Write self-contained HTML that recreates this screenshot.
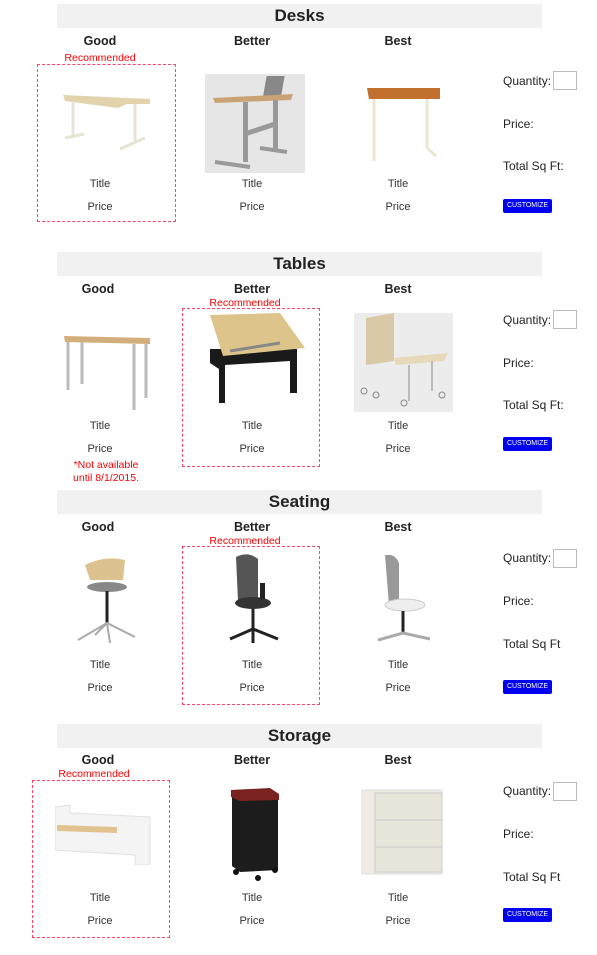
<!DOCTYPE html>
<html><head><meta charset="utf-8">
<style>
*{margin:0;padding:0;box-sizing:border-box}
body{width:597px;height:955px;background:#fff;position:relative;overflow:hidden;font-family:"Liberation Sans",Arial,sans-serif;color:#222}
.a{position:absolute}
.bar{position:absolute;left:57px;width:485px;height:24px;background:#f1f1f1;text-align:center;font-weight:bold;font-size:17px;line-height:24px;color:#222}
.lab{position:absolute;width:120px;text-align:center;font-weight:bold;font-size:12.5px;line-height:14px;color:#222}
.rec{position:absolute;width:120px;text-align:center;font-size:10.5px;color:#f00;line-height:12px}
.box{position:absolute;border:1px dashed #f46;}
.tx{position:absolute;width:120px;text-align:center;font-size:11px;line-height:12px;color:#333}
.rt{position:absolute;left:503px;font-size:12px;line-height:14px;color:#222}
.inp{position:absolute;left:553px;width:24px;height:19px;border:1px solid #bbb;background:#fff}
.btn{position:absolute;left:503px;width:49px;height:14px;background:#0000f0;border-radius:2px;color:#fff;font-size:7px;text-align:center;line-height:14px}
.na{position:absolute;width:120px;text-align:center;font-size:10.5px;line-height:13px;color:#f00}
</style></head><body>

<!-- DESKS -->
<div class="bar" style="top:4px">Desks</div>
<div class="lab" style="left:40px;top:34px">Good</div>
<div class="lab" style="left:192px;top:34px">Better</div>
<div class="lab" style="left:338px;top:34px">Best</div>
<div class="rec" style="left:40px;top:52px">Recommended</div>
<div class="box" style="left:37px;top:64px;width:139px;height:158px"></div>
<svg class="a" style="left:60px;top:93px" width="95" height="62" viewBox="0 0 95 62"><polygon points="3,2 90,6 90,11 67,11 58,15 5,8" fill="#e2d3ac"/><line x1="13" y1="8" x2="13" y2="45" stroke="#e8e4d4" stroke-width="3"/><line x1="5" y1="45" x2="24" y2="41" stroke="#e8e4d4" stroke-width="3"/><line x1="75" y1="11" x2="75" y2="48" stroke="#e8e4d4" stroke-width="3"/><line x1="60" y1="56" x2="85" y2="45" stroke="#e8e4d4" stroke-width="3"/></svg>
<svg class="a" style="left:205px;top:74px" width="100" height="99"><rect width="100" height="99" fill="#e6e6e6"/><rect x="62" y="2" width="18" height="22" fill="#888" transform="skewX(-10)"/><polygon points="8,24 88,20 86,26 10,29" fill="#c9a373"/><rect x="38" y="28" width="5" height="60" fill="#999"/><rect x="68" y="26" width="5" height="50" fill="#999"/><line x1="40" y1="60" x2="70" y2="50" stroke="#999" stroke-width="5"/><line x1="10" y1="88" x2="45" y2="93" stroke="#999" stroke-width="4"/><line x1="55" y1="74" x2="82" y2="78" stroke="#999" stroke-width="4"/></svg>
<svg class="a" style="left:364px;top:86px" width="80" height="80"><polygon points="3,2 76,2 76,13 5,13" fill="#c2702e"/><line x1="10" y1="13" x2="10" y2="75" stroke="#ece6d0" stroke-width="3"/><line x1="63" y1="13" x2="63" y2="62" stroke="#ece6d0" stroke-width="3"/><line x1="63" y1="62" x2="72" y2="70" stroke="#ece6d0" stroke-width="3"/></svg>
<div class="tx" style="left:40px;top:178px">Title</div>
<div class="tx" style="left:192px;top:178px">Title</div>
<div class="tx" style="left:338px;top:178px">Title</div>
<div class="tx" style="left:40px;top:201px">Price</div>
<div class="tx" style="left:192px;top:201px">Price</div>
<div class="tx" style="left:338px;top:201px">Price</div>
<div class="rt" style="top:74px">Quantity:</div><div class="inp" style="top:71px"></div>
<div class="rt" style="top:117px">Price:</div>
<div class="rt" style="top:159px">Total Sq Ft:</div>
<div class="btn" style="top:199px">CUSTOMIZE</div>

<!-- TABLES -->
<div class="bar" style="top:252px">Tables</div>
<div class="lab" style="left:38px;top:282px">Good</div>
<div class="lab" style="left:192px;top:282px">Better</div>
<div class="lab" style="left:338px;top:282px">Best</div>
<div class="rec" style="left:185px;top:297px">Recommended</div>
<div class="box" style="left:182px;top:308px;width:138px;height:159px"></div>
<svg class="a" style="left:62px;top:334px" width="90" height="78"><polygon points="2,2 88,4 88,10 3,8" fill="#d3ad7a"/><line x1="6" y1="8" x2="6" y2="56" stroke="#bbb" stroke-width="3"/><line x1="20" y1="8" x2="20" y2="50" stroke="#bbb" stroke-width="3"/><line x1="72" y1="10" x2="72" y2="76" stroke="#bbb" stroke-width="3"/><line x1="84" y1="10" x2="84" y2="64" stroke="#bbb" stroke-width="3"/></svg>
<svg class="a" style="left:205px;top:313px" width="100" height="90"><polygon points="5,36 92,36 92,40 92,80 85,80 85,48 20,52 20,90 14,90 14,56 5,50" fill="#1a1a1a"/><polygon points="5,2 75,0 100,35 18,43" fill="#dcc48a"/><line x1="25" y1="38" x2="75" y2="30" stroke="#888" stroke-width="3"/></svg>
<svg class="a" style="left:354px;top:313px" width="99" height="99"><rect width="99" height="99" fill="#ececec"/><polygon points="12,5 40,0 40,48 12,52" fill="#d9c9a6"/><polygon points="40,45 94,40 90,48 42,52" fill="#e6d8b8"/><line x1="78" y1="48" x2="78" y2="78" stroke="#bbb" stroke-width="2"/><line x1="55" y1="52" x2="55" y2="88" stroke="#bbb" stroke-width="2"/><circle cx="50" cy="90" r="3" fill="none" stroke="#888"/><circle cx="88" cy="82" r="3" fill="none" stroke="#888"/><circle cx="10" cy="78" r="3" fill="none" stroke="#888"/><circle cx="22" cy="82" r="3" fill="none" stroke="#888"/></svg>
<div class="tx" style="left:40px;top:420px">Title</div>
<div class="tx" style="left:192px;top:420px">Title</div>
<div class="tx" style="left:338px;top:420px">Title</div>
<div class="tx" style="left:40px;top:443px">Price</div>
<div class="tx" style="left:192px;top:443px">Price</div>
<div class="tx" style="left:338px;top:443px">Price</div>
<div class="na" style="left:46px;top:459px">*Not available<br>until 8/1/2015.</div>
<div class="rt" style="top:313px">Quantity:</div><div class="inp" style="top:310px"></div>
<div class="rt" style="top:356px">Price:</div>
<div class="rt" style="top:398px">Total Sq Ft:</div>
<div class="btn" style="top:437px">CUSTOMIZE</div>

<!-- SEATING -->
<div class="bar" style="top:490px">Seating</div>
<div class="lab" style="left:38px;top:520px">Good</div>
<div class="lab" style="left:192px;top:520px">Better</div>
<div class="lab" style="left:338px;top:520px">Best</div>
<div class="rec" style="left:185px;top:535px">Recommended</div>
<div class="box" style="left:182px;top:546px;width:138px;height:159px"></div>
<svg class="a" style="left:75px;top:555px" width="65" height="90"><path d="M10,10 Q30,0 50,5 L48,25 L15,25 Z" fill="#dcc28f"/><ellipse cx="32" cy="32" rx="20" ry="5" fill="#888"/><line x1="32" y1="36" x2="32" y2="68" stroke="#222" stroke-width="3"/><path d="M3,85 L32,68 L60,82 M32,68 L35,88 M32,68 L20,80" stroke="#aaa" stroke-width="2" fill="none"/></svg>
<svg class="a" style="left:228px;top:553px" width="55" height="92"><path d="M8,4 Q20,-2 30,6 L30,48 L10,48 Z" fill="#555"/><ellipse cx="25" cy="50" rx="18" ry="6" fill="#333"/><rect x="32" y="30" width="5" height="16" fill="#222"/><line x1="25" y1="56" x2="25" y2="76" stroke="#222" stroke-width="3"/><path d="M2,86 L25,76 L50,86 M25,76 L25,90" stroke="#222" stroke-width="3" fill="none"/></svg>
<svg class="a" style="left:375px;top:555px" width="60" height="92"><path d="M10,0 Q20,-2 24,8 L24,50 L14,50 Z" fill="#999"/><ellipse cx="30" cy="50" rx="20" ry="6" fill="#eee" stroke="#ccc"/><line x1="28" y1="56" x2="28" y2="78" stroke="#222" stroke-width="3"/><path d="M3,85 L28,78 L55,84" stroke="#aaa" stroke-width="3" fill="none"/></svg>
<div class="tx" style="left:40px;top:659px">Title</div>
<div class="tx" style="left:192px;top:659px">Title</div>
<div class="tx" style="left:338px;top:659px">Title</div>
<div class="tx" style="left:40px;top:682px">Price</div>
<div class="tx" style="left:192px;top:682px">Price</div>
<div class="tx" style="left:338px;top:682px">Price</div>
<div class="rt" style="top:551px">Quantity:</div><div class="inp" style="top:549px"></div>
<div class="rt" style="top:594px">Price:</div>
<div class="rt" style="top:637px">Total Sq Ft</div>
<div class="btn" style="top:680px">CUSTOMIZE</div>

<!-- STORAGE -->
<div class="bar" style="top:724px">Storage</div>
<div class="lab" style="left:38px;top:753px">Good</div>
<div class="lab" style="left:192px;top:753px">Better</div>
<div class="lab" style="left:338px;top:753px">Best</div>
<div class="rec" style="left:34px;top:768px">Recommended</div>
<div class="box" style="left:32px;top:780px;width:138px;height:158px"></div>
<svg class="a" style="left:55px;top:805px" width="96" height="60"><polygon points="0,2 15,0 15,8 95,12 95,60 80,60 80,50 0,45" fill="#f4f4f4" stroke="#e0e0e0"/><polygon points="2,20 62,22 62,28 2,26" fill="#e0c38e"/></svg>
<svg class="a" style="left:230px;top:788px" width="50" height="95"><polygon points="2,5 40,3 48,8 48,82 10,84 2,78" fill="#1c1c1c"/><polygon points="1,2 40,0 49,6 49,12 10,13 1,9" fill="#7a2222"/><circle cx="6" cy="84" r="3" fill="#111"/><circle cx="28" cy="90" r="3" fill="#111"/><circle cx="45" cy="82" r="3" fill="#111"/></svg>
<svg class="a" style="left:360px;top:788px" width="85" height="90"><rect x="2" y="2" width="80" height="84" fill="#efece3" stroke="#ddd"/><rect x="15" y="5" width="67" height="27" fill="#e8e5da" stroke="#ccc"/><rect x="15" y="32" width="67" height="27" fill="#e8e5da" stroke="#ccc"/><rect x="15" y="59" width="67" height="25" fill="#e8e5da" stroke="#ccc"/></svg>
<div class="tx" style="left:40px;top:892px">Title</div>
<div class="tx" style="left:192px;top:892px">Title</div>
<div class="tx" style="left:338px;top:892px">Title</div>
<div class="tx" style="left:40px;top:915px">Price</div>
<div class="tx" style="left:192px;top:915px">Price</div>
<div class="tx" style="left:338px;top:915px">Price</div>
<div class="rt" style="top:784px">Quantity:</div><div class="inp" style="top:782px"></div>
<div class="rt" style="top:827px">Price:</div>
<div class="rt" style="top:870px">Total Sq Ft</div>
<div class="btn" style="top:908px">CUSTOMIZE</div>

</body></html>
